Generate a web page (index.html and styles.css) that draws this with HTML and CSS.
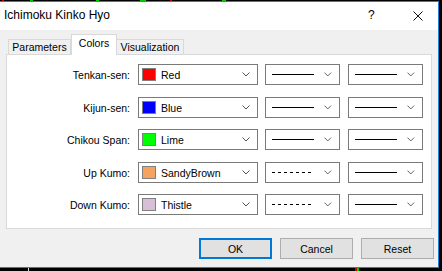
FILE: index.html
```html
<!DOCTYPE html>
<html lang="en">
<head>
  <meta charset="UTF-8" />
  <title>Ichimoku Kinko Hyo</title>
  <link rel="stylesheet" href="styles.css">
</head>
<body>
  <div class="chart-top"></div>
  <div class="window">
    <div class="titlebar">
      <div class="title">Ichimoku Kinko Hyo</div>
      <div class="help">?</div>
      <div class="close">
        <svg width="10" height="10" viewBox="0 0 10 10"><path d="M0.5 0.5 L9.5 9.5 M9.5 0.5 L0.5 9.5" stroke="#111" stroke-width="1" fill="none"/></svg>
      </div>
    </div>

    <div class="client">
      <div class="tabs">
        <div class="tab tab-params">Parameters</div>
        <div class="tab tab-colors active">Colors</div>
        <div class="tab tab-vis">Visualization</div>
      </div>

      <div class="panel">
        <div class="row">
          <div class="label">Tenkan-sen:</div>
          <div class="combo color-combo">
            <span class="swatch" style="background:#ff0000"></span>
            <span class="name">Red</span>
            <svg class="chev" width="8" height="5" viewBox="0 0 8 5"><path d="M0.5 0.5 L4 4 L7.5 0.5" stroke="#555" fill="none"/></svg>
          </div>
          <div class="combo line-combo">
            <span class="line solid"></span>
            <svg class="chev" width="8" height="5" viewBox="0 0 8 5"><path d="M0.5 0.5 L4 4 L7.5 0.5" stroke="#555" fill="none"/></svg>
          </div>
          <div class="combo line-combo">
            <span class="line solid"></span>
            <svg class="chev" width="8" height="5" viewBox="0 0 8 5"><path d="M0.5 0.5 L4 4 L7.5 0.5" stroke="#555" fill="none"/></svg>
          </div>
        </div>

        <div class="row">
          <div class="label">Kijun-sen:</div>
          <div class="combo color-combo">
            <span class="swatch" style="background:#0000ff"></span>
            <span class="name">Blue</span>
            <svg class="chev" width="8" height="5" viewBox="0 0 8 5"><path d="M0.5 0.5 L4 4 L7.5 0.5" stroke="#555" fill="none"/></svg>
          </div>
          <div class="combo line-combo">
            <span class="line solid"></span>
            <svg class="chev" width="8" height="5" viewBox="0 0 8 5"><path d="M0.5 0.5 L4 4 L7.5 0.5" stroke="#555" fill="none"/></svg>
          </div>
          <div class="combo line-combo">
            <span class="line solid"></span>
            <svg class="chev" width="8" height="5" viewBox="0 0 8 5"><path d="M0.5 0.5 L4 4 L7.5 0.5" stroke="#555" fill="none"/></svg>
          </div>
        </div>

        <div class="row">
          <div class="label">Chikou Span:</div>
          <div class="combo color-combo">
            <span class="swatch" style="background:#00ff00"></span>
            <span class="name">Lime</span>
            <svg class="chev" width="8" height="5" viewBox="0 0 8 5"><path d="M0.5 0.5 L4 4 L7.5 0.5" stroke="#555" fill="none"/></svg>
          </div>
          <div class="combo line-combo">
            <span class="line solid"></span>
            <svg class="chev" width="8" height="5" viewBox="0 0 8 5"><path d="M0.5 0.5 L4 4 L7.5 0.5" stroke="#555" fill="none"/></svg>
          </div>
          <div class="combo line-combo">
            <span class="line solid"></span>
            <svg class="chev" width="8" height="5" viewBox="0 0 8 5"><path d="M0.5 0.5 L4 4 L7.5 0.5" stroke="#555" fill="none"/></svg>
          </div>
        </div>

        <div class="row">
          <div class="label">Up Kumo:</div>
          <div class="combo color-combo">
            <span class="swatch" style="background:#f4a460"></span>
            <span class="name">SandyBrown</span>
            <svg class="chev" width="8" height="5" viewBox="0 0 8 5"><path d="M0.5 0.5 L4 4 L7.5 0.5" stroke="#555" fill="none"/></svg>
          </div>
          <div class="combo line-combo">
            <span class="line dashed"></span>
            <svg class="chev" width="8" height="5" viewBox="0 0 8 5"><path d="M0.5 0.5 L4 4 L7.5 0.5" stroke="#555" fill="none"/></svg>
          </div>
          <div class="combo line-combo">
            <span class="line solid"></span>
            <svg class="chev" width="8" height="5" viewBox="0 0 8 5"><path d="M0.5 0.5 L4 4 L7.5 0.5" stroke="#555" fill="none"/></svg>
          </div>
        </div>

        <div class="row">
          <div class="label">Down Kumo:</div>
          <div class="combo color-combo">
            <span class="swatch" style="background:#d8bfd8"></span>
            <span class="name">Thistle</span>
            <svg class="chev" width="8" height="5" viewBox="0 0 8 5"><path d="M0.5 0.5 L4 4 L7.5 0.5" stroke="#555" fill="none"/></svg>
          </div>
          <div class="combo line-combo">
            <span class="line dashed"></span>
            <svg class="chev" width="8" height="5" viewBox="0 0 8 5"><path d="M0.5 0.5 L4 4 L7.5 0.5" stroke="#555" fill="none"/></svg>
          </div>
          <div class="combo line-combo">
            <span class="line solid"></span>
            <svg class="chev" width="8" height="5" viewBox="0 0 8 5"><path d="M0.5 0.5 L4 4 L7.5 0.5" stroke="#555" fill="none"/></svg>
          </div>
        </div>
      </div>

      <div class="buttons">
        <button class="btn default">OK</button>
        <button class="btn">Cancel</button>
        <button class="btn">Reset</button>
      </div>
    </div>
  </div>
  <div class="chart-bottom"></div>
</body>
</html>
```

FILE: styles.css
```css
body, html {
  margin: 0;
  padding: 0;
  width: 442px;
  height: 271px;
  overflow: hidden;
  background: #000;
  font-family: "Liberation Sans", Arial, sans-serif;
  font-size: 10.5px;
  color: #000;
}

.chart-top {
  height: 1px;
  background: linear-gradient(to right,
    #000 0 2px, #c00 2px 4px, #000 4px 30px, #0c0 30px 33px, #000 33px 96px,
    #0c0 96px 99px, #000 99px 140px, #0c0 140px 146px, #000 146px 170px,
    #c00 170px 172px, #000 172px 222px, #0c0 222px 226px, #000 226px);
}

.window {
  box-sizing: border-box;
  width: 439px;
  height: 267px;
  border-top: 1px solid #1883d7;
  border-right: 1px solid #1883d7;
  border-bottom: 1px solid #1883d7;
  display: flex;
  flex-direction: column;
}

.titlebar {
  height: 28px;
  background: #fff;
  display: flex;
  align-items: flex-start;
  padding-top: 6px;
  box-sizing: border-box;
}

.title {
  font-size: 12px;
  padding-left: 4px;
  flex: 1;
  color: #000;
}

.help {
  font-size: 12px;
  width: 8px;
  margin-right: 37px;
}

.close {
  width: 10px;
  margin-right: 15px;
  padding-top: 3px;
  line-height: 0;
}

.client {
  flex: 1;
  background: #f0f0f0;
  padding: 4px 4px 0 6px;
}

.tabs {
  display: flex;
  align-items: flex-end;
  height: 21px;
  margin-left: 2px;
  margin-bottom: -1px;
  position: relative;
  z-index: 1;
}

.tab {
  box-sizing: border-box;
  height: 15px;
  border: 1px solid #d9d9d9;
  border-bottom: none;
  background: #f0f0f0;
  text-align: center;
  line-height: 15px;
  margin-bottom: 1px;
}

.tab-params { width: 63px; }
.tab-vis { width: 67px; border-left: none; }

.tab.active {
  width: 46px;
  height: 21px;
  background: #fff;
  line-height: 17px;
  margin-bottom: 0;
}

.panel {
  box-sizing: border-box;
  width: 426px;
  height: 175px;
  border: 1px solid #d9d9d9;
  background: #fff;
  padding-top: 9px;
}

.row {
  display: flex;
  align-items: center;
  height: 21px;
  margin-bottom: 12px;
}

.row:nth-child(even) {
  margin-bottom: 11px;
}

.label {
  width: 123px;
  margin-right: 8px;
  text-align: right;
}

.combo {
  box-sizing: border-box;
  height: 21px;
  border: 1px solid #7a7a7a;
  background: #fff;
  display: flex;
  align-items: center;
}

.color-combo {
  width: 120px;
  padding-left: 3px;
  margin-right: 7px;
}

.line-combo {
  width: 75px;
  padding-left: 6px;
  margin-right: 8px;
}

.swatch {
  box-sizing: border-box;
  width: 14px;
  height: 13px;
  border: 1px solid #808080;
  margin-right: 5px;
}

.name {
  flex: 1;
}

.chev {
  margin-right: 7px;
}

.line {
  width: 45px;
  height: 1px;
  margin-right: 10px;
}

.line.solid {
  background: #000;
}

.line.dashed {
  background: repeating-linear-gradient(to right, #000 0 3px, transparent 3px 6px);
}

.buttons {
  display: flex;
  justify-content: flex-end;
  gap: 8px;
  margin-top: 9px;
}

.btn {
  box-sizing: border-box;
  width: 73px;
  height: 21px;
  background: #e1e1e1;
  border: 1px solid #adadad;
  font-family: "Liberation Sans", Arial, sans-serif;
  font-size: 10.5px;
  color: #000;
  padding: 0;
  margin: 0;
}

.btn.default {
  border: 2px solid #0078d7;
}

.chart-bottom {
  height: 3px;
  background: linear-gradient(to right,
    #000 0 28px, #ddd 28px 29px, #000 29px 355px, #c00 355px 357px,
    #0c0 357px 359px, #000 359px);
}
```
